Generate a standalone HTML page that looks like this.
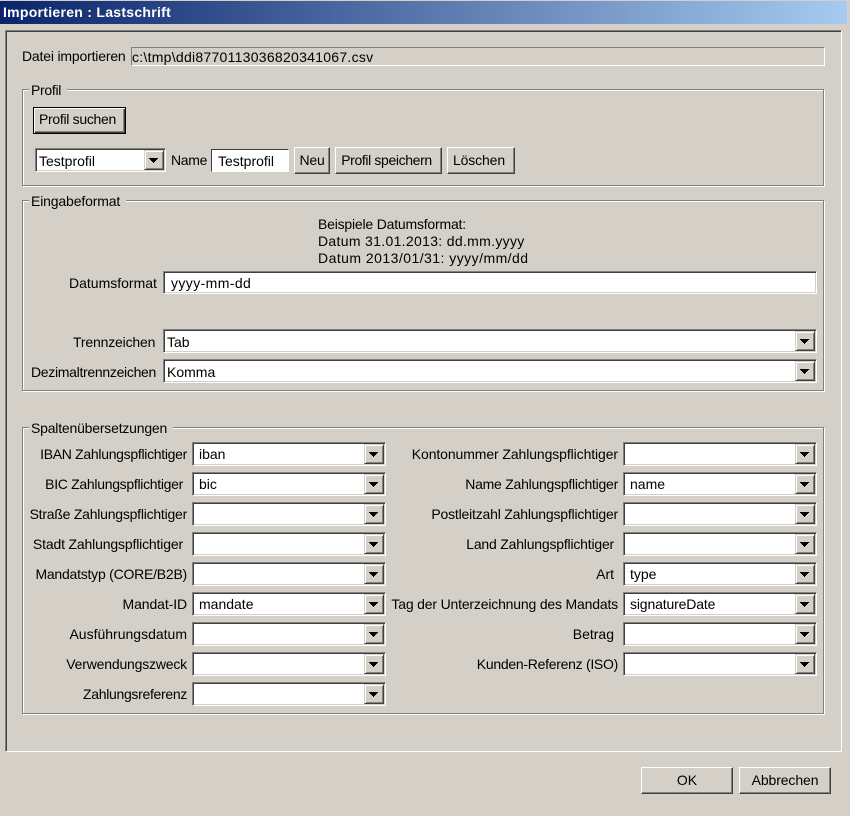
<!DOCTYPE html>
<html lang="de"><head><meta charset="utf-8"><title>Importieren : Lastschrift</title>
<style>
html,body{margin:0;padding:0;background:#d4d0c8}
#w{position:relative;width:850px;height:816px;overflow:hidden;background:#d4d0c8;font:14px/18px "Liberation Sans",sans-serif;color:#000}
#w div,#w span{position:absolute;box-sizing:border-box;white-space:nowrap}
.tb{left:0;top:1px;width:847px;height:23px;background:linear-gradient(90deg,#0a246a,#a6caf0);color:#fff;font-weight:bold;font-size:14px;line-height:23px;padding-left:3px;letter-spacing:.28px}
.m{left:5px;top:30px;width:837px;height:722px;border:1px solid;border-color:#808080 #fff #fff #808080;box-shadow:inset 1px 1px 0 #404040}
.f{left:131px;top:47px;width:694px;height:19px;border:1px solid;border-color:#808080 #fff #fff #808080;line-height:18px;letter-spacing:.27px}
.g{left:22px;width:802px;border:1px solid #808080;box-shadow:1px 1px 0 #fff,inset 1px 1px 0 #fff}
.l{background:#d4d0c8;left:29px;padding:0 6px 0 2px;height:16px;line-height:16px}
.r{text-align:right;height:18px}
.t{height:18px}
.b{background:#d4d0c8;text-align:center;border:1px solid;border-color:#fff #404040 #404040 #fff;box-shadow:inset -1px -1px 0 #808080}
.d{border:1px solid #000;box-shadow:inset 1px 1px 0 #fff,inset -1px -1px 0 #404040,inset -2px -2px 0 #808080;background:#d4d0c8;text-align:center}
.c{background:#fff;border:1px solid;border-color:#808080 #fff #fff #808080;box-shadow:inset 1px 1px 0 #404040,inset -1px -1px 0 #d4d0c8;height:24px;line-height:22px}
.a{top:1px;right:1px;width:20px;height:20px;background:#d4d0c8;border:1px solid;border-color:#d4d0c8 #404040 #404040 #d4d0c8;box-shadow:inset 1px 1px 0 #fff,inset -1px -1px 0 #808080}
.a svg{position:absolute;left:4px;top:7px}
.v{height:22px;line-height:22px;top:0}
</style></head><body>
<div id="w">
<div class="tb">Importieren : Lastschrift</div>
<div class="m"></div>
<span class="t" style="left:22px;top:47px;letter-spacing:-.18px">Datei importieren</span>
<div class="f">c:\tmp\ddi8770113036820341067.csv</div>

<div class="g" style="top:89px;height:97px"></div>
<span class="l" style="top:82px;letter-spacing:-.3px">Profil</span>
<div class="d" style="left:33px;top:107px;width:93px;height:27px;line-height:23px;letter-spacing:-.3px;padding-right:4px">Profil suchen</div>
<div class="c" style="left:35px;top:148px;width:131px"><span class="v" style="left:3px;top:1px">Testprofil</span><div class="a"><svg width="9" height="5" shape-rendering="crispEdges"><path d="M0 0h9v1H0zM1 1h7v1H1zM2 2h5v1H2zM3 3h3v1H3zM4 4h1v1H4z"/></svg></div></div>
<span class="t" style="left:171px;top:151px;letter-spacing:-.3px">Name</span>
<div class="c" style="left:211px;top:149px;width:78px;height:23px;box-shadow:none;border-color:#404040 #fff #fff #404040"><span class="v" style="left:6px;top:0">Testprofil</span></div>
<div class="b" style="left:294px;top:147px;width:36px;height:27px;line-height:24px;letter-spacing:-.2px">Neu</div>
<div class="b" style="left:335px;top:147px;width:107px;height:27px;line-height:24px;letter-spacing:-.37px;padding-right:4px">Profil speichern</div>
<div class="b" style="left:447px;top:147px;width:68px;height:27px;line-height:24px;letter-spacing:-.14px;padding-right:4px">Löschen</div>

<div class="g" style="top:200px;height:191px"></div>
<span class="l" style="top:193px;letter-spacing:-.15px">Eingabeformat</span>
<span class="t" style="left:318px;top:215px;letter-spacing:-.2px">Beispiele Datumsformat:</span>
<span class="t" style="left:318px;top:232px;letter-spacing:.32px">Datum 31.01.2013: dd.mm.yyyy</span>
<span class="t" style="left:318px;top:249px;letter-spacing:.46px">Datum 2013/01/31: yyyy/mm/dd</span>
<span class="t" style="left:69px;top:274px">Datumsformat</span>
<div class="c" style="left:163px;top:271px;width:654px;height:23px"><span class="v" style="left:7px;top:0;letter-spacing:.4px">yyyy-mm-dd</span></div>
<span class="t" style="left:73px;top:333px;letter-spacing:-.17px">Trennzeichen</span>
<div class="c" style="left:163px;top:329px;width:654px"><span class="v" style="left:3px;top:1px">Tab</span><div class="a"><svg width="9" height="5" shape-rendering="crispEdges"><path d="M0 0h9v1H0zM1 1h7v1H1zM2 2h5v1H2zM3 3h3v1H3zM4 4h1v1H4z"/></svg></div></div>
<span class="t" style="left:31px;top:363px;letter-spacing:-.3px">Dezimaltrennzeichen</span>
<div class="c" style="left:163px;top:359px;width:654px"><span class="v" style="left:3px;top:1px">Komma</span><div class="a"><svg width="9" height="5" shape-rendering="crispEdges"><path d="M0 0h9v1H0zM1 1h7v1H1zM2 2h5v1H2zM3 3h3v1H3zM4 4h1v1H4z"/></svg></div></div>

<div class="g" style="top:427px;height:287px"></div>
<span class="l" style="top:420px;letter-spacing:-.2px">Spaltenübersetzungen</span>

<span class="r" style="right:663px;top:445px;letter-spacing:-.3px">IBAN Zahlungspflichtiger</span>
<div class="c" style="left:192px;top:442px;width:194px"><span class="v" style="left:6px">iban</span><div class="a"><svg width="9" height="5" shape-rendering="crispEdges"><path d="M0 0h9v1H0zM1 1h7v1H1zM2 2h5v1H2zM3 3h3v1H3zM4 4h1v1H4z"/></svg></div></div>
<span class="r" style="right:667px;top:475px;letter-spacing:-.3px">BIC Zahlungspflichtiger</span>
<div class="c" style="left:192px;top:472px;width:194px"><span class="v" style="left:6px">bic</span><div class="a"><svg width="9" height="5" shape-rendering="crispEdges"><path d="M0 0h9v1H0zM1 1h7v1H1zM2 2h5v1H2zM3 3h3v1H3zM4 4h1v1H4z"/></svg></div></div>
<span class="r" style="right:663px;top:505px;letter-spacing:-.23px">Straße Zahlungspflichtiger</span>
<div class="c" style="left:192px;top:502px;width:194px"><div class="a"><svg width="9" height="5" shape-rendering="crispEdges"><path d="M0 0h9v1H0zM1 1h7v1H1zM2 2h5v1H2zM3 3h3v1H3zM4 4h1v1H4z"/></svg></div></div>
<span class="r" style="right:667px;top:535px;letter-spacing:-.16px">Stadt Zahlungspflichtiger</span>
<div class="c" style="left:192px;top:532px;width:194px"><div class="a"><svg width="9" height="5" shape-rendering="crispEdges"><path d="M0 0h9v1H0zM1 1h7v1H1zM2 2h5v1H2zM3 3h3v1H3zM4 4h1v1H4z"/></svg></div></div>
<span class="r" style="right:663px;top:565px;letter-spacing:-.23px">Mandatstyp (CORE/B2B)</span>
<div class="c" style="left:192px;top:562px;width:194px"><div class="a"><svg width="9" height="5" shape-rendering="crispEdges"><path d="M0 0h9v1H0zM1 1h7v1H1zM2 2h5v1H2zM3 3h3v1H3zM4 4h1v1H4z"/></svg></div></div>
<span class="r" style="right:663px;top:595px;letter-spacing:-.1px">Mandat-ID</span>
<div class="c" style="left:192px;top:592px;width:194px"><span class="v" style="left:6px">mandate</span><div class="a"><svg width="9" height="5" shape-rendering="crispEdges"><path d="M0 0h9v1H0zM1 1h7v1H1zM2 2h5v1H2zM3 3h3v1H3zM4 4h1v1H4z"/></svg></div></div>
<span class="r" style="right:663px;top:625px">Ausführungsdatum</span>
<div class="c" style="left:192px;top:622px;width:194px"><div class="a"><svg width="9" height="5" shape-rendering="crispEdges"><path d="M0 0h9v1H0zM1 1h7v1H1zM2 2h5v1H2zM3 3h3v1H3zM4 4h1v1H4z"/></svg></div></div>
<span class="r" style="right:663px;top:655px;letter-spacing:-.19px">Verwendungszweck</span>
<div class="c" style="left:192px;top:652px;width:194px"><div class="a"><svg width="9" height="5" shape-rendering="crispEdges"><path d="M0 0h9v1H0zM1 1h7v1H1zM2 2h5v1H2zM3 3h3v1H3zM4 4h1v1H4z"/></svg></div></div>
<span class="r" style="right:663px;top:685px;letter-spacing:-.31px">Zahlungsreferenz</span>
<div class="c" style="left:192px;top:682px;width:194px"><div class="a"><svg width="9" height="5" shape-rendering="crispEdges"><path d="M0 0h9v1H0zM1 1h7v1H1zM2 2h5v1H2zM3 3h3v1H3zM4 4h1v1H4z"/></svg></div></div>

<span class="r" style="right:232px;top:445px;letter-spacing:-.1px">Kontonummer Zahlungspflichtiger</span>
<div class="c" style="left:623px;top:442px;width:194px"><div class="a"><svg width="9" height="5" shape-rendering="crispEdges"><path d="M0 0h9v1H0zM1 1h7v1H1zM2 2h5v1H2zM3 3h3v1H3zM4 4h1v1H4z"/></svg></div></div>
<span class="r" style="right:232px;top:475px;letter-spacing:-.25px">Name Zahlungspflichtiger</span>
<div class="c" style="left:623px;top:472px;width:194px"><span class="v" style="left:6px">name</span><div class="a"><svg width="9" height="5" shape-rendering="crispEdges"><path d="M0 0h9v1H0zM1 1h7v1H1zM2 2h5v1H2zM3 3h3v1H3zM4 4h1v1H4z"/></svg></div></div>
<span class="r" style="right:232px;top:505px;letter-spacing:-.2px">Postleitzahl Zahlungspflichtiger</span>
<div class="c" style="left:623px;top:502px;width:194px"><div class="a"><svg width="9" height="5" shape-rendering="crispEdges"><path d="M0 0h9v1H0zM1 1h7v1H1zM2 2h5v1H2zM3 3h3v1H3zM4 4h1v1H4z"/></svg></div></div>
<span class="r" style="right:236px;top:535px;letter-spacing:-.2px">Land Zahlungspflichtiger</span>
<div class="c" style="left:623px;top:532px;width:194px"><div class="a"><svg width="9" height="5" shape-rendering="crispEdges"><path d="M0 0h9v1H0zM1 1h7v1H1zM2 2h5v1H2zM3 3h3v1H3zM4 4h1v1H4z"/></svg></div></div>
<span class="r" style="right:236px;top:565px">Art</span>
<div class="c" style="left:623px;top:562px;width:194px"><span class="v" style="left:6px">type</span><div class="a"><svg width="9" height="5" shape-rendering="crispEdges"><path d="M0 0h9v1H0zM1 1h7v1H1zM2 2h5v1H2zM3 3h3v1H3zM4 4h1v1H4z"/></svg></div></div>
<span class="r" style="right:232px;top:595px;letter-spacing:-.18px">Tag der Unterzeichnung des Mandats</span>
<div class="c" style="left:623px;top:592px;width:194px"><span class="v" style="left:6px;letter-spacing:-.15px">signatureDate</span><div class="a"><svg width="9" height="5" shape-rendering="crispEdges"><path d="M0 0h9v1H0zM1 1h7v1H1zM2 2h5v1H2zM3 3h3v1H3zM4 4h1v1H4z"/></svg></div></div>
<span class="r" style="right:236px;top:625px">Betrag</span>
<div class="c" style="left:623px;top:622px;width:194px"><div class="a"><svg width="9" height="5" shape-rendering="crispEdges"><path d="M0 0h9v1H0zM1 1h7v1H1zM2 2h5v1H2zM3 3h3v1H3zM4 4h1v1H4z"/></svg></div></div>
<span class="r" style="right:232px;top:655px;letter-spacing:-.28px">Kunden-Referenz (ISO)</span>
<div class="c" style="left:623px;top:652px;width:194px"><div class="a"><svg width="9" height="5" shape-rendering="crispEdges"><path d="M0 0h9v1H0zM1 1h7v1H1zM2 2h5v1H2zM3 3h3v1H3zM4 4h1v1H4z"/></svg></div></div>

<div class="b" style="left:641px;top:767px;width:92px;height:27px;line-height:25px">OK</div>
<div class="b" style="left:739px;top:767px;width:92px;height:27px;line-height:25px;letter-spacing:-.1px">Abbrechen</div>
</div>
</body></html>
